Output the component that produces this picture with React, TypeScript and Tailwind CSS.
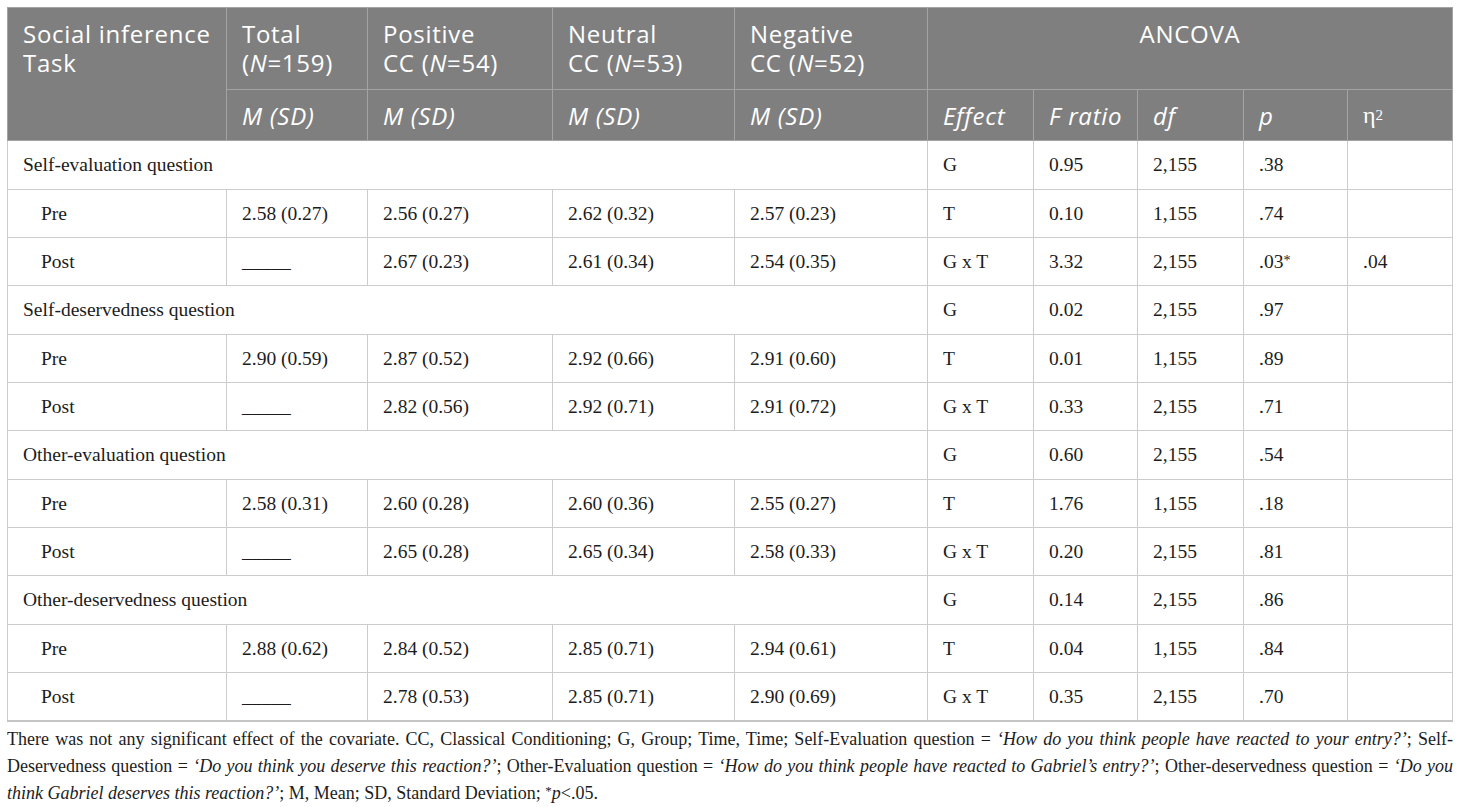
import React from "react";

type Section = {
  label: string;
  g: string[];
  pre: string[];
  preA: string[];
  post: string[];
  postA: string[];
};

const sections: Section[] = [
  {
    label: "Self-evaluation question",
    g: ["G", "0.95", "2,155", ".38", ""],
    pre: ["2.58 (0.27)", "2.56 (0.27)", "2.62 (0.32)", "2.57 (0.23)"],
    preA: ["T", "0.10", "1,155", ".74", ""],
    post: ["_____", "2.67 (0.23)", "2.61 (0.34)", "2.54 (0.35)"],
    postA: ["G x T", "3.32", "2,155", ".03*", ".04"],
  },
  {
    label: "Self-deservedness question",
    g: ["G", "0.02", "2,155", ".97", ""],
    pre: ["2.90 (0.59)", "2.87 (0.52)", "2.92 (0.66)", "2.91 (0.60)"],
    preA: ["T", "0.01", "1,155", ".89", ""],
    post: ["_____", "2.82 (0.56)", "2.92 (0.71)", "2.91 (0.72)"],
    postA: ["G x T", "0.33", "2,155", ".71", ""],
  },
  {
    label: "Other-evaluation question",
    g: ["G", "0.60", "2,155", ".54", ""],
    pre: ["2.58 (0.31)", "2.60 (0.28)", "2.60 (0.36)", "2.55 (0.27)"],
    preA: ["T", "1.76", "1,155", ".18", ""],
    post: ["_____", "2.65 (0.28)", "2.65 (0.34)", "2.58 (0.33)"],
    postA: ["G x T", "0.20", "2,155", ".81", ""],
  },
  {
    label: "Other-deservedness question",
    g: ["G", "0.14", "2,155", ".86", ""],
    pre: ["2.88 (0.62)", "2.84 (0.52)", "2.85 (0.71)", "2.94 (0.61)"],
    preA: ["T", "0.04", "1,155", ".84", ""],
    post: ["_____", "2.78 (0.53)", "2.85 (0.71)", "2.90 (0.69)"],
    postA: ["G x T", "0.35", "2,155", ".70", ""],
  },
];

const colWidths = [219, 141, 185, 182, 193, 106, 104, 106, 104, 105];

const th =
  "border border-[#a3a3a3] bg-[#7f7f7f] text-white font-normal text-left px-[15px] align-top whitespace-nowrap";
const td = "border border-[#cccccc] px-[15px] align-middle text-[#1c1c1c] whitespace-nowrap";

function Val({ v }: { v: string }) {
  if (v.endsWith("*")) {
    return (
      <>
        {v.slice(0, -1)}
        <span className="relative top-[-3px] text-[14px]">*</span>
      </>
    );
  }
  return <>{v}</>;
}

export default function App() {
  const heights = ["h-[49px]", "h-[48px]", "h-[48px]"];
  return (
    <div className="w-[1460px] h-[807px] bg-white overflow-hidden pt-[7px] pl-[7px]">
      <table className="table-fixed border-collapse w-[1445px] font-['Liberation_Serif',serif] text-[19.5px]">
        <colgroup>
          {colWidths.map((w, i) => (
            <col key={i} style={{ width: w }} />
          ))}
        </colgroup>
        <thead className="font-['Open_Sans',sans-serif] text-[24px] leading-[29px] tracking-[0.03em]">
          <tr className="h-[82px]">
            <th rowSpan={2} className={`${th} pt-[11px]`}>
              Social inference
              <br />
              Task
            </th>
            <th className={`${th} pt-[11px]`}>
              Total
              <br />(<i>N</i>=159)
            </th>
            <th className={`${th} pt-[11px]`}>
              Positive
              <br />
              CC (<i>N</i>=54)
            </th>
            <th className={`${th} pt-[11px]`}>
              Neutral
              <br />
              CC (<i>N</i>=53)
            </th>
            <th className={`${th} pt-[11px]`}>
              Negative
              <br />
              CC (<i>N</i>=52)
            </th>
            <th colSpan={5} className={`${th} pt-[11px] !text-center`}>
              ANCOVA
            </th>
          </tr>
          <tr className="h-[51px] italic">
            <th className={`${th} !align-middle`}>M (SD)</th>
            <th className={`${th} !align-middle`}>M (SD)</th>
            <th className={`${th} !align-middle`}>M (SD)</th>
            <th className={`${th} !align-middle`}>M (SD)</th>
            <th className={`${th} !align-middle`}>Effect</th>
            <th className={`${th} !align-middle`}>F ratio</th>
            <th className={`${th} !align-middle`}>df</th>
            <th className={`${th} !align-middle`}>p</th>
            <th className={`${th} !align-middle not-italic font-['Liberation_Serif',serif] tracking-normal`}>
              η<sup className="text-[15px] relative top-[-3px]">2</sup>
            </th>
          </tr>
        </thead>
        <tbody>
          {sections.map((s, si) => {
            const last = si === 3 ? "border-b-2 border-b-[#c4c4c4]" : "";
            return (
              <React.Fragment key={si}>
                <tr className={heights[0]}>
                  <td colSpan={5} className={td}>
                    {s.label}
                  </td>
                  {s.g.map((v, i) => (
                    <td key={i} className={td}>
                      <Val v={v} />
                    </td>
                  ))}
                </tr>
                <tr className={heights[1]}>
                  <td className={`${td} !pl-[33px]`}>Pre</td>
                  {s.pre.map((v, i) => (
                    <td key={i} className={td}>
                      {v}
                    </td>
                  ))}
                  {s.preA.map((v, i) => (
                    <td key={i} className={td}>
                      <Val v={v} />
                    </td>
                  ))}
                </tr>
                <tr className={heights[2]}>
                  <td className={`${td} !pl-[33px] ${last}`}>Post</td>
                  {s.post.map((v, i) => (
                    <td key={i} className={`${td} ${last}`}>
                      {v}
                    </td>
                  ))}
                  {s.postA.map((v, i) => (
                    <td key={i} className={`${td} ${last}`}>
                      <Val v={v} />
                    </td>
                  ))}
                </tr>
              </React.Fragment>
            );
          })}
        </tbody>
      </table>
      <div className="w-[1446px] font-['Liberation_Serif',serif] text-[18px] leading-[27px] text-[#1c1c1c] mt-[4px]">
        <div className="text-justify [text-align-last:justify] whitespace-nowrap">
          There was not any significant effect of the covariate. CC, Classical Conditioning; G, Group; Time, Time;
          Self-Evaluation question = <i>‘How do you think people have reacted to your entry?’</i>; Self-
        </div>
        <div className="text-justify [text-align-last:justify] whitespace-nowrap">
          Deservedness question = <i>‘Do you think you deserve this reaction?’</i>; Other-Evaluation question ={" "}
          <i>‘How do you think people have reacted to Gabriel’s entry?’</i>; Other-deservedness question ={" "}
          <i>‘Do you</i>
        </div>
        <div>
          <i>think Gabriel deserves this reaction?’</i>; M, Mean; SD, Standard Deviation;{" "}
          <span className="relative top-[-4px] text-[13px]">*</span>
          <i>p</i>&lt;.05.
        </div>
      </div>
    </div>
  );
}
